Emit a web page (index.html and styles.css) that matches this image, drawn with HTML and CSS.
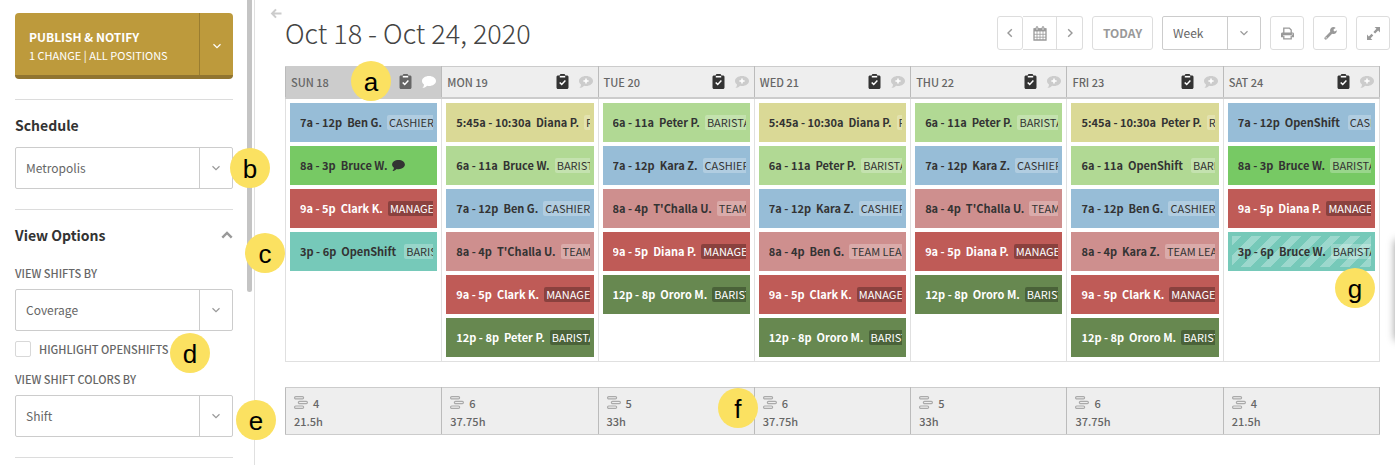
FILE: index.html
```html
<!DOCTYPE html>
<html lang="en">
<head>
  <meta charset="UTF-8">
  <meta name="viewport" content="width=device-width, initial-scale=1.0">
  <title>Schedule</title>
  <link rel="stylesheet" href="styles.css">
</head>
<body>
  <svg class="sprite" aria-hidden="true">
    <symbol id="down" viewBox="0 0 10 10"><path d="M1.500 3.300 5 6.700 8.500 3.300" fill="none" stroke="currentColor" stroke-width="1.200"/></symbol>
    <symbol id="left" viewBox="0 0 10 10"><path d="M6.800 1.200 3 5l3.800 3.800" fill="none" stroke="currentColor" stroke-width="1.400"/></symbol>
    <symbol id="right" viewBox="0 0 10 10"><path d="M3.200 1.200 7 5 3.200 8.800" fill="none" stroke="currentColor" stroke-width="1.400"/></symbol>
    <symbol id="up" viewBox="0 0 12 8"><path d="M1.300 6.700 6 2l4.700 4.700" fill="none" stroke="currentColor" stroke-width="2.400"/></symbol>
    <symbol id="back" viewBox="0 0 12 12"><path d="M6 1.500 1.700 6 6 10.500M2 6h10" fill="none" stroke="currentColor" stroke-width="2.200"/></symbol>
    <symbol id="clipboard" viewBox="0 0 12 15">
      <path fill="currentColor" d="M1.500 1.500h1.700C3.200.6 3.800 0 4.600 0h2.800c.8 0 1.400.6 1.400 1.500h1.700c.8 0 1.500.6 1.500 1.400v10.600c0 .8-.7 1.500-1.500 1.500h-9C.7 15 0 14.300 0 13.500V2.900c0-.8.7-1.400 1.500-1.400z"/>
      <path fill="#fff" d="M3.300 1.900h5.400v1.600H3.300z"/>
      <path d="M3.200 8.500 5.200 10.400 8.900 6.600" fill="none" stroke="#fff" stroke-width="1.500"/>
    </symbol>
    <symbol id="comment" viewBox="0 0 14 12"><path fill="currentColor" d="M7 0c3.900 0 7 2.200 7 5s-3.100 5-7 5c-.7 0-1.300-.1-1.900-.2C3.700 11.200 1.900 12 .4 12c1-.9 1.500-2.100 1.600-3.500C.8 7.600 0 6.400 0 5c0-2.800 3.100-5 7-5z"/></symbol>
    <symbol id="comment-plus" viewBox="0 0 14 12"><use href="#comment"/><path d="M7 2.400v5.200M4.400 5h5.200" stroke="#fff" stroke-width="1.500"/></symbol>
    <symbol id="calendar" viewBox="0 0 14 15">
      <path d="M1 3h12v11H1z" fill="none" stroke="currentColor" stroke-width="1.300"/>
      <path d="M1 2.400h12v3H1z" fill="currentColor"/>
      <path d="M1 8.300h12M1 11.200h12M4 5v9M7 5v9M10 5v9" stroke="currentColor" stroke-width=".8"/>
      <path d="M4 1.500v2.500M10 1.500v2.500" stroke="currentColor" stroke-width="2.600" stroke-linecap="round"/>
      <path d="M4 1.300v2.700M10 1.300v2.700" stroke="#fff" stroke-width=".7"/>
    </symbol>
    <symbol id="print" viewBox="0 0 14 13">
      <path d="M3 6V.7h6L11 2.700V6" fill="none" stroke="currentColor" stroke-width="1.400"/>
      <path d="M1.500 5.500h11c.8 0 1.500.7 1.500 1.500v3.500h-2.300V8.500H2.300v2H0V7c0-.8.7-1.500 1.500-1.500z" fill="currentColor"/>
      <path d="M3 9v3.300h8V9" fill="none" stroke="currentColor" stroke-width="1.400"/>
      <circle cx="12.200" cy="7" r=".6" fill="#fff"/>
    </symbol>
    <symbol id="wrench" viewBox="0 0 14 14">
      <path d="M1.900 12.100 8 6" stroke="currentColor" stroke-width="2.900" stroke-linecap="round"/>
      <path d="M12.600 1.100 10.400 2.400v1.700l1.200.7 2.200-1.200c.2 2.300-1.400 4-3.500 4-2.200 0-3.800-1.700-3.800-3.800S8.100 0 10.300 0c.8 0 1.700.4 2.300 1.100z" fill="currentColor"/>
      <circle cx="2.300" cy="11.700" r=".7" fill="#fff"/>
    </symbol>
    <symbol id="expand" viewBox="0 0 12 12">
      <path d="M7 0h5v5l-1.700-1.700-2.800 2.800-1.600-1.600 2.800-2.800zM5 12H0V7l1.700 1.700 2.500-2.500 1.600 1.600-2.500 2.500z" fill="currentColor"/>
    </symbol>
    <symbol id="bars" viewBox="0 0 14 13">
      <g fill="none" stroke="currentColor" stroke-width="1.200"><rect x=".6" y=".6" width="9" height="2.300" rx="1.100"/><rect x="4.400" y="5.300" width="9" height="2.300" rx="1.100"/><rect x=".6" y="10" width="9" height="2.300" rx="1.100"/></g>
    </symbol>
  </svg>

  <aside class="sidebar">
    <div class="publish">
      <button class="publish-main"><strong>PUBLISH &amp; NOTIFY</strong><span>1 CHANGE | ALL POSITIONS</span></button>
      <button class="publish-more" aria-label="Publish options"><svg class="icon-sm"><use href="#down"/></svg></button>
    </div>

    <section class="panel">
      <h2><label for="schedule">Schedule</label></h2>
      <div class="select">
        <select id="schedule"><option>Metropolis</option></select>
        <span class="arrow"><svg class="icon-sm"><use href="#down"/></svg></span>
      </div>
    </section>

    <section class="panel">
      <h2>View Options <button class="collapse" aria-label="Collapse view options"><svg><use href="#up"/></svg></button></h2>
      <label class="field-label" for="viewBy">VIEW SHIFTS BY</label>
      <div class="select">
        <select id="viewBy"><option>Coverage</option></select>
        <span class="arrow"><svg class="icon-sm"><use href="#down"/></svg></span>
      </div>
      <div class="check">
        <input type="checkbox" id="highlight">
        <label for="highlight">HIGHLIGHT OPENSHIFTS</label>
      </div>
      <label class="field-label" for="colorsBy">VIEW SHIFT COLORS BY</label>
      <div class="select">
        <select id="colorsBy"><option>Shift</option></select>
        <span class="arrow"><svg class="icon-sm"><use href="#down"/></svg></span>
      </div>
    </section>
    <div class="scroll-thumb"></div>
    <span class="marker marker-b">b</span>
    <span class="marker marker-c">c</span>
    <span class="marker marker-d">d</span>
    <span class="marker marker-e">e</span>
  </aside>

  <main class="main">
    <button class="back" aria-label="Hide sidebar"><svg><use href="#back"/></svg></button>
    <header class="topbar">
      <h1>Oct 18 - Oct 24, 2020</h1>
      <div class="toolbar">
        <div class="btn-group">
          <button class="btn btn-narrow" aria-label="Previous week"><svg class="icon-sm"><use href="#left"/></svg></button>
          <button class="btn" aria-label="Pick a date"><svg class="icon-cal"><use href="#calendar"/></svg></button>
          <button class="btn btn-narrow" aria-label="Next week"><svg class="icon-sm"><use href="#right"/></svg></button>
        </div>
        <button class="btn btn-today">TODAY</button>
        <div class="select select-small">
          <select aria-label="Range"><option>Week</option></select>
          <span class="arrow"><svg class="icon-sm"><use href="#down"/></svg></span>
        </div>
        <button class="btn" aria-label="Print"><svg class="icon"><use href="#print"/></svg></button>
        <button class="btn" aria-label="Tools"><svg class="icon"><use href="#wrench"/></svg></button>
        <button class="btn" aria-label="Full screen"><svg class="icon"><use href="#expand"/></svg></button>
      </div>
    </header>

    <table class="calendar">
      <thead><tr id="days"></tr></thead>
      <tbody><tr id="shifts"></tr></tbody>
    </table>

    <table class="totals">
      <tbody><tr id="totals"></tr></tbody>
    </table>
    <div class="drawer"></div>
  </main>

  <script>
    // color, time, name, position
    const week = [
      { day: "SUN 18", count: 4, hours: "21.5h", past: true, marker: "a", shifts: [
        ["blue", "7a - 12p", "Ben G.", "CASHIER"],
        ["green", "8a - 3p", "Bruce W.", ""],
        ["red", "9a - 5p", "Clark K.", "MANAGER"],
        ["teal", "3p - 6p", "OpenShift", "BARISTA"]
      ]},
      { day: "MON 19", count: 6, hours: "37.75h", shifts: [
        ["yellow", "5:45a - 10:30a", "Diana P.", "ROASTER"],
        ["lime", "6a - 11a", "Bruce W.", "BARISTA"],
        ["blue", "7a - 12p", "Ben G.", "CASHIER"],
        ["pink", "8a - 4p", "T'Challa U.", "TEAM LEAD"],
        ["red", "9a - 5p", "Clark K.", "MANAGER"],
        ["forest", "12p - 8p", "Peter P.", "BARISTA"]
      ]},
      { day: "TUE 20", count: 5, hours: "33h", shifts: [
        ["lime", "6a - 11a", "Peter P.", "BARISTA"],
        ["blue", "7a - 12p", "Kara Z.", "CASHIER"],
        ["pink", "8a - 4p", "T'Challa U.", "TEAM LEAD"],
        ["red", "9a - 5p", "Diana P.", "MANAGER"],
        ["forest", "12p - 8p", "Ororo M.", "BARISTA"]
      ]},
      { day: "WED 21", count: 6, hours: "37.75h", totalMarker: "f", shifts: [
        ["yellow", "5:45a - 10:30a", "Diana P.", "ROASTER"],
        ["lime", "6a - 11a", "Peter P.", "BARISTA"],
        ["blue", "7a - 12p", "Kara Z.", "CASHIER"],
        ["pink", "8a - 4p", "Ben G.", "TEAM LEAD"],
        ["red", "9a - 5p", "Clark K.", "MANAGER"],
        ["forest", "12p - 8p", "Ororo M.", "BARISTA"]
      ]},
      { day: "THU 22", count: 5, hours: "33h", shifts: [
        ["lime", "6a - 11a", "Peter P.", "BARISTA"],
        ["blue", "7a - 12p", "Kara Z.", "CASHIER"],
        ["pink", "8a - 4p", "T'Challa U.", "TEAM LEAD"],
        ["red", "9a - 5p", "Diana P.", "MANAGER"],
        ["forest", "12p - 8p", "Ororo M.", "BARISTA"]
      ]},
      { day: "FRI 23", count: 6, hours: "37.75h", shifts: [
        ["yellow", "5:45a - 10:30a", "Peter P.", "ROASTER"],
        ["lime", "6a - 11a", "OpenShift", "BARISTA"],
        ["blue", "7a - 12p", "Ben G.", "CASHIER"],
        ["pink", "8a - 4p", "Kara Z.", "TEAM LEAD"],
        ["red", "9a - 5p", "Clark K.", "MANAGER"],
        ["forest", "12p - 8p", "Ororo M.", "BARISTA"]
      ]},
      { day: "SAT 24", count: 4, hours: "21.5h", cellMarker: "g", shifts: [
        ["blue", "7a - 12p", "OpenShift", "CASHIER"],
        ["green", "8a - 3p", "Bruce W.", "BARISTA"],
        ["red", "9a - 5p", "Diana P.", "MANAGER"],
        ["teal striped", "3p - 6p", "Bruce W.", "BARISTA"]
      ]}
    ];

    function marker(letter) {
      return letter ? `<span class="marker marker-${letter}">${letter}</span>` : "";
    }

    function shiftHtml([color, time, name, position]) {
      const open = name === "OpenShift" ? " open" : "";
      const end = position
        ? `<span class="tag">${position}</span>`
        : `<svg class="note"><use href="#comment"/></svg>`;
      return `<button class="shift ${color}"><span class="shift-line"><span>${time}</span><span class="name${open}">${name}</span>${end}</span></button>`;
    }

    document.getElementById("days").innerHTML = week.map(d => `
      <th scope="col"${d.past ? ' class="past"' : ""}>
        <div class="day"><span>${d.day}</span>
          <button aria-label="Tasks"><svg class="icon-clip"><use href="#clipboard"/></svg></button>
          <button class="comment" aria-label="Notes"><svg class="icon-comment"><use href="#${d.past ? "comment" : "comment-plus"}"/></svg></button>
        </div>${marker(d.marker)}
      </th>`).join("");

    document.getElementById("shifts").innerHTML = week.map(d =>
      `<td><div class="stack">${d.shifts.map(shiftHtml).join("")}</div>${marker(d.cellMarker)}</td>`).join("");

    document.getElementById("totals").innerHTML = week.map(d =>
      `<td><div class="count"><svg><use href="#bars"/></svg>${d.count}</div><div>${d.hours}</div>${marker(d.totalMarker)}</td>`).join("");
  </script>
</body>
</html>
```
FILE: styles.css
```css
* {
  box-sizing: border-box;
}
body {
  margin: 0;
  display: flex;
  min-height: 100vh;
  overflow: hidden;
  background: #fff;
  color: #666;
  font-family: "Noto Sans CJK SC", "Noto Sans", sans-serif;
  font-size: 12px;
  line-height: 18px;
}
button, select {
  font: inherit;
  color: inherit;
  cursor: pointer;
}
button {
  padding: 0;
  border: none;
  background: none;
}
svg {
  display: block;
}
.sprite {
  position: absolute;
  width: 0;
  height: 0;
}
.icon-sm { width: 10px; height: 10px; }
.icon { width: 13px; height: 13px; }
.icon-cal { width: 14px; height: 15px; }
.icon-clip { width: 13px; height: 15px; }
.icon-comment { width: 14px; height: 12px; }

/* Sidebar */
.sidebar {
  position: relative;
  flex: 0 0 255px;
  padding: 13px 21px 0 15px;
  border-right: 1px solid #e0e0e0;
}
.publish {
  display: flex;
  height: 66px;
  background: #bd9a3c;
  border-bottom: 4px solid #917530;
  border-radius: 4px;
  color: #fff;
  margin-bottom: 20px;
}
.publish-main {
  flex: 1;
  padding: 3px 0 0 14px;
  text-align: left;
  font-size: 11px;
}
.publish-main strong {
  display: block;
  font-size: 12px;
  font-weight: 700;
}
.publish-main span {
  display: block;
}
.publish-more {
  width: 34px;
  border-left: 1px solid #9a7d30;
  display: grid;
  place-items: center;
  padding-top: 4px;
}
.panel {
  border-top: 1px solid #dcdcdc;
  padding: 15px 0 20px;
}
.panel:last-of-type {
  border-bottom: 1px solid #dcdcdc;
}
h2 {
  display: flex;
  justify-content: space-between;
  align-items: center;
  margin: 0 0 12px;
  font-size: 14px;
  line-height: 20px;
  font-weight: 700;
  color: #333;
}
.collapse svg {
  width: 12px;
  height: 8px;
  color: #999;
}
.select {
  display: grid;
  grid-template-columns: 1fr 33px;
  height: 42px;
  border: 1px solid #ccc;
  border-radius: 2px;
}
.select select {
  grid-area: 1 / 1 / 2 / 3;
  appearance: none;
  border: none;
  background: none;
  padding: 0 40px 0 10px;
}
.arrow {
  grid-area: 1 / 2;
  display: grid;
  place-items: center;
  border-left: 1px solid #ccc;
  color: #999;
  pointer-events: none;
}
.field-label {
  display: block;
  margin: 19px 0 7px;
  font-size: 11px;
  font-weight: 500;
}
.check {
  display: flex;
  align-items: center;
  gap: 8px;
  margin: 9px 0 -7px;
  font-size: 11px;
  font-weight: 500;
}
.check input {
  appearance: none;
  width: 16px;
  height: 16px;
  margin: 0;
  border: 1px solid #d8d8d8;
  border-radius: 2px;
}
.scroll-thumb {
  position: absolute;
  top: 0;
  right: 2px;
  width: 5px;
  height: 292px;
  background: #c4c4c4;
  border-radius: 0 0 3px 3px;
}

/* Header */
.main {
  position: relative;
  flex: 1;
  min-width: 0;
  padding: 16px 15px 0 30px;
}
.back {
  position: absolute;
  left: 15px;
  top: 8px;
  color: #ccc;
}
.back svg {
  width: 12px;
  height: 11px;
}
.topbar {
  display: flex;
  justify-content: space-between;
  align-items: center;
  height: 34px;
  margin: 0 -10px 16px 0;
}
h1 {
  margin: 0;
  font-size: 27px;
  line-height: 34px;
  font-weight: 300;
  color: #444;
}
.toolbar {
  display: flex;
  gap: 9px;
}
.btn {
  display: grid;
  place-items: center;
  width: 34px;
  height: 34px;
  border: 1px solid #ddd;
  border-radius: 3px;
  color: #999;
}
.btn-group {
  display: flex;
}
.btn-group .btn + .btn {
  border-left: none;
  border-radius: 0;
}
.btn-group .btn:last-child {
  border-radius: 0 3px 3px 0;
}
.btn-narrow {
  width: 26px;
}
.btn-today {
  width: 61px;
  font-weight: 700;
}
.select-small {
  width: 99px;
  height: 34px;
}

/* Calendar */
table {
  width: 100%;
  table-layout: fixed;
  border-collapse: collapse;
}
th, td {
  position: relative;
  padding: 0;
  text-align: left;
  vertical-align: top;
}
.calendar th {
  height: 31px;
  background: #eee;
  border: 1px solid #bbb;
  border-width: 1px 1px 2px;
  border-color: #ccc #bbb;
  font-size: 11px;
  font-weight: 500;
}
.calendar th.past {
  background: #ccc;
}
.day {
  display: flex;
  align-items: center;
  gap: 10px;
  height: 29px;
  padding: 0 5px;
}
.day span {
  flex: 1;
}
.day button {
  color: #333;
}
.past .day button {
  color: #666;
}
.day .comment {
  color: #ccc;
}
.past .day .comment {
  color: #fff;
}
.calendar td {
  border: 1px solid #e0e0e0;
}
.stack {
  display: grid;
  gap: 4px;
  padding: 4px;
}
.shift {
  min-width: 0;
  height: 39px;
  padding: 4px 4px 4px 10px;
  color: #333;
  font-size: 11px;
  font-weight: 700;
  text-align: left;
}
.shift-line {
  display: flex;
  align-items: center;
  height: 31px;
  overflow: hidden;
  white-space: nowrap;
}
.name {
  margin: 0 5px;
}
.name.open {
  margin-right: 8px;
}
.tag {
  padding: 0 2px;
  border-radius: 2px;
  background: rgba(255, 255, 255, 0.25);
  line-height: 15px;
  font-weight: 400;
}
.note {
  width: 13px;
  height: 11px;
}
.blue { background: #97bdd7; }
.green { background: #77c964; }
.red { background: #bf5b57; }
.teal { background: #76c9b9; }
.yellow { background: #dad996; }
.lime { background: #b1d994; }
.pink { background: #ce8f8e; }
.forest { background: #678850; }
.red, .forest {
  color: #fff;
}
.red .tag, .forest .tag {
  background: rgba(0, 0, 0, 0.28);
}
.striped {
  background: repeating-linear-gradient(135deg, #9cd8cd 0 7px, #76c9b9 7px 14px) content-box, #76c9b9;
  padding-left: 4px;
}
.striped .shift-line {
  padding-left: 6px;
}

/* Totals */
.totals {
  margin-top: 25px;
  font-size: 11px;
  font-weight: 500;
}
.totals td {
  height: 47px;
  padding: 6px 8px 2px;
  background: #eee;
  border: 1px solid #bbb;
  border-top-color: #ccc;
  border-bottom-color: #ccc;
}
.count {
  display: flex;
  align-items: center;
  gap: 5px;
}
.count svg {
  width: 14px;
  height: 13px;
  color: #aaa;
}
.drawer {
  position: absolute;
  top: 240px;
  right: -10px;
  width: 10px;
  height: 100px;
  box-shadow: 0 0 8px rgba(0, 0, 0, 0.4);
}

/* Lettered markers over the page */
.marker {
  position: absolute;
  z-index: 2;
  width: 40px;
  height: 40px;
  border-radius: 50%;
  background: #fbe161;
  color: #000;
  font: 26px/42px "Liberation Sans", Arial, sans-serif;
  text-align: center;
}
.marker-a { left: 65px; top: -6px; }
.marker-b { left: 230px; top: 148px; }
.marker-c { left: 245px; top: 233px; }
.marker-d { left: 170px; top: 333px; }
.marker-e { left: 236px; top: 400px; }
.marker-f { left: -37px; top: 0; }
.marker-g { right: 4px; top: 169px; }
```
